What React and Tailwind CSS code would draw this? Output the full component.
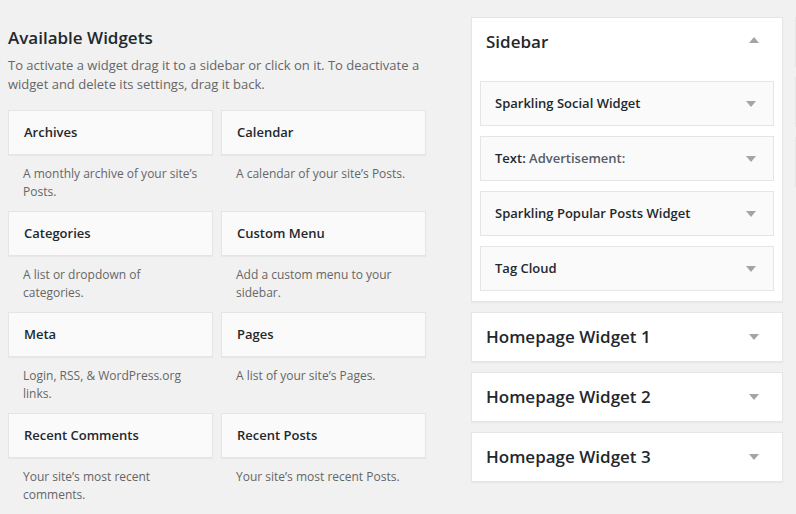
const available = [
  { title: "Archives", desc: "A monthly archive of your site’s Posts." },
  { title: "Calendar", desc: "A calendar of your site’s Posts." },
  { title: "Categories", desc: "A list or dropdown of categories." },
  { title: "Custom Menu", desc: "Add a custom menu to your sidebar." },
  { title: "Meta", desc: "Login, RSS, & WordPress.org links." },
  { title: "Pages", desc: "A list of your site’s Pages." },
  { title: "Recent Comments", desc: "Your site’s most recent comments." },
  { title: "Recent Posts", desc: "Your site’s most recent Posts." },
];

const sidebarWidgets = [
  { title: "Sparkling Social Widget" },
  { title: "Text:", extra: "Advertisement:" },
  { title: "Sparkling Popular Posts Widget" },
  { title: "Tag Cloud" },
];

const Arrow = ({ up }) => (
  <svg width="10" height="6" viewBox="0 0 10 6" className="shrink-0">
    {up ? (
      <polygon points="0,6 10,6 5,0" fill="#a0a5aa" />
    ) : (
      <polygon points="0,0 10,0 5,6" fill="#a0a5aa" />
    )}
  </svg>
);

const App = () => {
  return (
    <div
      className="w-[796px] h-[514px] overflow-hidden bg-[#f1f1f1] flex text-[#23282d]"
      style={{ fontFamily: '"Open Sans", "Noto Sans", sans-serif' }}
    >
      {/* Available widgets */}
      <div className="w-[426px] shrink-0 pl-2 pt-[25px]">
        <h2 className="text-[17px] leading-[26px] font-semibold">Available Widgets</h2>
        <p className="mt-[5px] text-[13px] leading-[19px] text-[#666]">
          To activate a widget drag it to a sidebar or click on it. To deactivate a widget and delete its settings, drag it back.
        </p>
        <div className="mt-[16px] grid grid-cols-2 gap-x-2">
          {available.map((w) => (
            <div key={w.title} className="h-[101px]">
              <div className="h-[45px] bg-[#fafafa] border border-[#e5e5e5] shadow-[0_1px_1px_rgba(0,0,0,0.04)] px-[15px] flex items-center">
                <span className="text-[13px] font-semibold">{w.title}</span>
              </div>
              <p className="pt-[10px] px-[15px] text-[12px] leading-[18px] text-[#666]">{w.desc}</p>
            </div>
          ))}
        </div>
      </div>

      {/* Sidebars */}
      <div className="ml-[45px] w-[312px] shrink-0 pt-[17px] flex flex-col gap-[10px]">
        <div className="bg-white border border-[#e5e5e5] shadow-[0_1px_1px_rgba(0,0,0,0.04)] pb-[10px]">
          <div className="h-[63px] pl-[14px] pr-[23px] pt-[12px] flex items-start justify-between">
            <h3 className="text-[17px] leading-[24px] font-semibold">Sidebar</h3>
            <div className="mt-[7px]">
              <Arrow up />
            </div>
          </div>
          <div className="px-2 flex flex-col gap-[10px]">
            {sidebarWidgets.map((w) => (
              <div
                key={w.title}
                className="h-[45px] bg-[#fafafa] border border-[#e5e5e5] pl-[14px] pr-[17px] flex items-center justify-between"
              >
                <span className="text-[13px] font-semibold">
                  {w.title}
                  {w.extra && <span className="text-[#555d66]"> {w.extra}</span>}
                </span>
                <Arrow />
              </div>
            ))}
          </div>
        </div>
        {[1, 2, 3].map((n) => (
          <div
            key={n}
            className="h-[50px] bg-white border border-[#e5e5e5] shadow-[0_1px_1px_rgba(0,0,0,0.04)] pl-[14px] pr-[23px] flex items-center justify-between"
          >
            <h3 className="text-[17px] font-semibold">Homepage Widget {n}</h3>
            <Arrow />
          </div>
        ))}
      </div>

      {/* Next column, cut off */}
      <div className="ml-3 w-[312px] shrink-0 pt-[17px] flex flex-col gap-[10px]">
        {[1, 2, 3].map((n) => (
          <div key={n} className="h-[50px] bg-white border border-[#e5e5e5]" />
        ))}
      </div>
    </div>
  );
};

export default App;
